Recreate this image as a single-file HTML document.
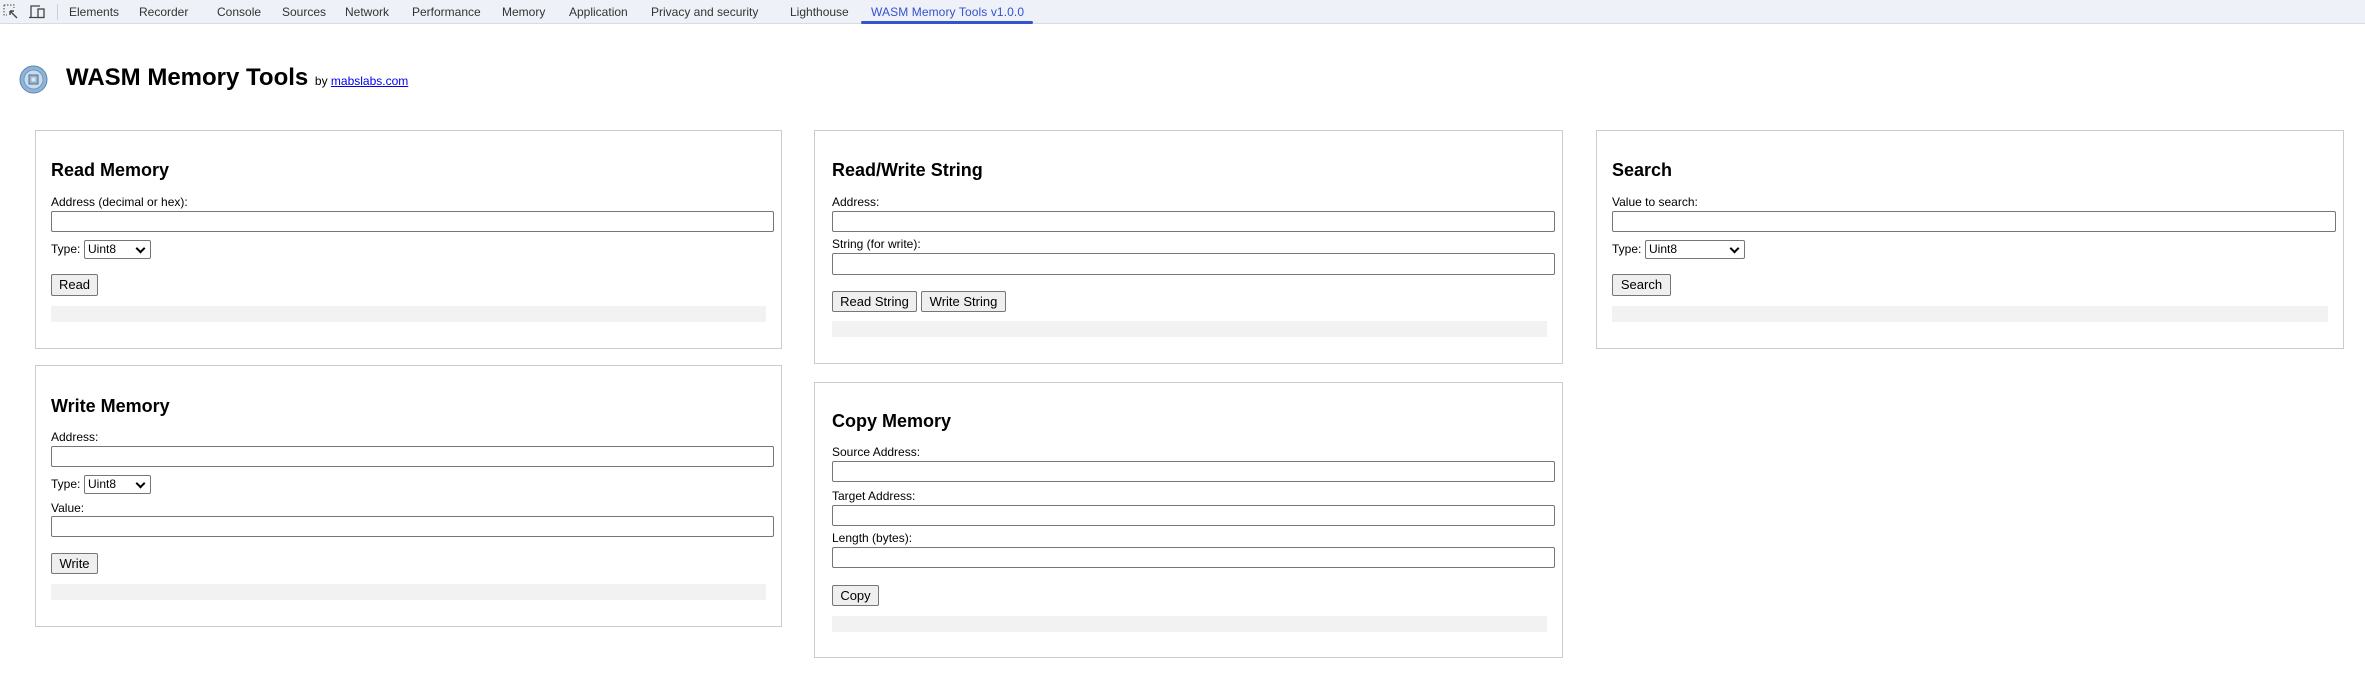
<!DOCTYPE html>
<html><head><meta charset="utf-8"><style>
*{box-sizing:border-box;margin:0;padding:0}
body{width:2365px;height:677px;background:#fff;position:relative;overflow:hidden;font-family:"Liberation Sans",Arial,sans-serif;color:#000}
.a{position:absolute;white-space:nowrap}
.bar{position:absolute;left:0;top:0;width:2365px;height:24px;background:#eef1f8;border-bottom:1px solid #d6dbe6}
.tab{position:absolute;top:5px;font-size:12px;line-height:14px;color:#333}
.card{position:absolute;border:1px solid #ccc;background:#fff}
.h{position:absolute;font-size:18px;font-weight:bold;line-height:22px}
.l{position:absolute;font-size:12px;line-height:14px}
.in{position:absolute;border:1px solid #767676;border-radius:2px;background:#fff}
.sel{position:absolute;border:1px solid #767676;border-radius:2px;background:#fff;font-size:12px;line-height:17px;padding-left:3px}
.sel:after{content:"";position:absolute;right:6px;top:4px;width:5px;height:5px;border-right:2px solid #000;border-bottom:2px solid #000;transform:rotate(45deg)}
.btn{position:absolute;border:1px solid #767676;border-radius:2px;background:#efefef;font-size:13px;line-height:20px;text-align:center}
.out{position:absolute;background:#f2f2f2}
</style></head><body>
<div class="bar"></div>
<svg class="a" style="left:3px;top:4px" width="16" height="16" viewBox="0 0 16 16"><path d="M1 1h10v3M1 1v10h3" fill="none" stroke="#444" stroke-dasharray="1.5 1.5"/><path d="M7 7l7 7M7 7h4M7 7v4" stroke="#444" stroke-width="1.4" fill="none"/></svg>
<svg class="a" style="left:28px;top:4px" width="18" height="16" viewBox="0 0 18 16"><path d="M3 13V2h9M1 13.5h9" stroke="#444" stroke-width="1.3" fill="none"/><rect x="10" y="5" width="6" height="8.5" fill="none" stroke="#444" stroke-width="1.3"/></svg>
<div class="a" style="left:57px;top:4px;width:1px;height:16px;background:#ccd"></div>
<div class="tab" style="left:69px">Elements</div>
<div class="tab" style="left:139px">Recorder</div>
<div class="tab" style="left:217px">Console</div>
<div class="tab" style="left:282px">Sources</div>
<div class="tab" style="left:345px">Network</div>
<div class="tab" style="left:412px">Performance</div>
<div class="tab" style="left:502px">Memory</div>
<div class="tab" style="left:569px">Application</div>
<div class="tab" style="left:651px">Privacy and security</div>
<div class="tab" style="left:790px">Lighthouse</div>
<div class="tab" style="left:871px;color:#3553cc;letter-spacing:0.1px">WASM Memory Tools v1.0.0</div>
<div class="a" style="left:861px;top:21px;width:172px;height:3px;background:#3553cc;border-radius:2px"></div>

<svg class="a" style="left:19px;top:65px" width="29" height="29" viewBox="0 0 29 29"><circle cx="14.5" cy="14.5" r="13.5" fill="#8fb4d6" stroke="#5a86b4"/><circle cx="14.5" cy="14.5" r="9.5" fill="#c9dcef" stroke="#6f97c0"/><rect x="10" y="10" width="9" height="9" fill="#9bb3cc" stroke="#55708e"/><rect x="12.5" y="12.5" width="4" height="4" fill="#dbe6f1"/></svg>
<div class="a" style="left:66px;top:64px;font-size:24px;font-weight:bold;line-height:28px">WASM Memory Tools <span style="font-size:12px;font-weight:normal">by <span style="color:#00e;text-decoration:underline">mabslabs.com</span></span></div>

<!-- Read Memory -->
<div class="card" style="left:35px;top:130px;width:747px;height:219px"></div>
<div class="h" style="left:51px;top:159px">Read Memory</div>
<div class="l" style="left:51px;top:195px">Address (decimal or hex):</div>
<div class="in" style="left:51px;top:211px;width:723px;height:21px"></div>
<div class="l" style="left:51px;top:242px">Type:</div>
<div class="sel" style="left:84px;top:240px;width:67px;height:19px">Uint8</div>
<div class="btn" style="left:51px;top:274px;width:47px;height:22px">Read</div>
<div class="out" style="left:51px;top:306px;width:715px;height:16px"></div>

<!-- Write Memory -->
<div class="card" style="left:35px;top:365px;width:747px;height:262px"></div>
<div class="h" style="left:51px;top:395px">Write Memory</div>
<div class="l" style="left:51px;top:430px">Address:</div>
<div class="in" style="left:51px;top:446px;width:723px;height:21px"></div>
<div class="l" style="left:51px;top:477px">Type:</div>
<div class="sel" style="left:84px;top:475px;width:67px;height:19px">Uint8</div>
<div class="l" style="left:51px;top:501px">Value:</div>
<div class="in" style="left:51px;top:516px;width:723px;height:21px"></div>
<div class="btn" style="left:51px;top:553px;width:47px;height:21px">Write</div>
<div class="out" style="left:51px;top:584px;width:715px;height:16px"></div>

<!-- Read/Write String -->
<div class="card" style="left:814px;top:130px;width:749px;height:234px"></div>
<div class="h" style="left:832px;top:159px">Read/Write String</div>
<div class="l" style="left:832px;top:195px">Address:</div>
<div class="in" style="left:832px;top:211px;width:723px;height:21px"></div>
<div class="l" style="left:832px;top:237px">String (for write):</div>
<div class="in" style="left:832px;top:253px;width:723px;height:22px"></div>
<div class="btn" style="left:832px;top:291px;width:85px;height:21px">Read String</div>
<div class="btn" style="left:921px;top:291px;width:85px;height:21px">Write String</div>
<div class="out" style="left:832px;top:321px;width:715px;height:16px"></div>

<!-- Copy Memory -->
<div class="card" style="left:814px;top:382px;width:749px;height:276px"></div>
<div class="h" style="left:832px;top:410px">Copy Memory</div>
<div class="l" style="left:832px;top:445px">Source Address:</div>
<div class="in" style="left:832px;top:461px;width:723px;height:21px"></div>
<div class="l" style="left:832px;top:489px">Target Address:</div>
<div class="in" style="left:832px;top:505px;width:723px;height:21px"></div>
<div class="l" style="left:832px;top:531px">Length (bytes):</div>
<div class="in" style="left:832px;top:547px;width:723px;height:21px"></div>
<div class="btn" style="left:832px;top:585px;width:47px;height:21px">Copy</div>
<div class="out" style="left:832px;top:616px;width:715px;height:16px"></div>

<!-- Search -->
<div class="card" style="left:1596px;top:130px;width:748px;height:219px"></div>
<div class="h" style="left:1612px;top:159px">Search</div>
<div class="l" style="left:1612px;top:195px">Value to search:</div>
<div class="in" style="left:1612px;top:211px;width:724px;height:21px"></div>
<div class="l" style="left:1612px;top:242px">Type:</div>
<div class="sel" style="left:1645px;top:240px;width:100px;height:19px">Uint8</div>
<div class="btn" style="left:1612px;top:274px;width:59px;height:22px">Search</div>
<div class="out" style="left:1612px;top:306px;width:716px;height:16px"></div>
</body></html>
